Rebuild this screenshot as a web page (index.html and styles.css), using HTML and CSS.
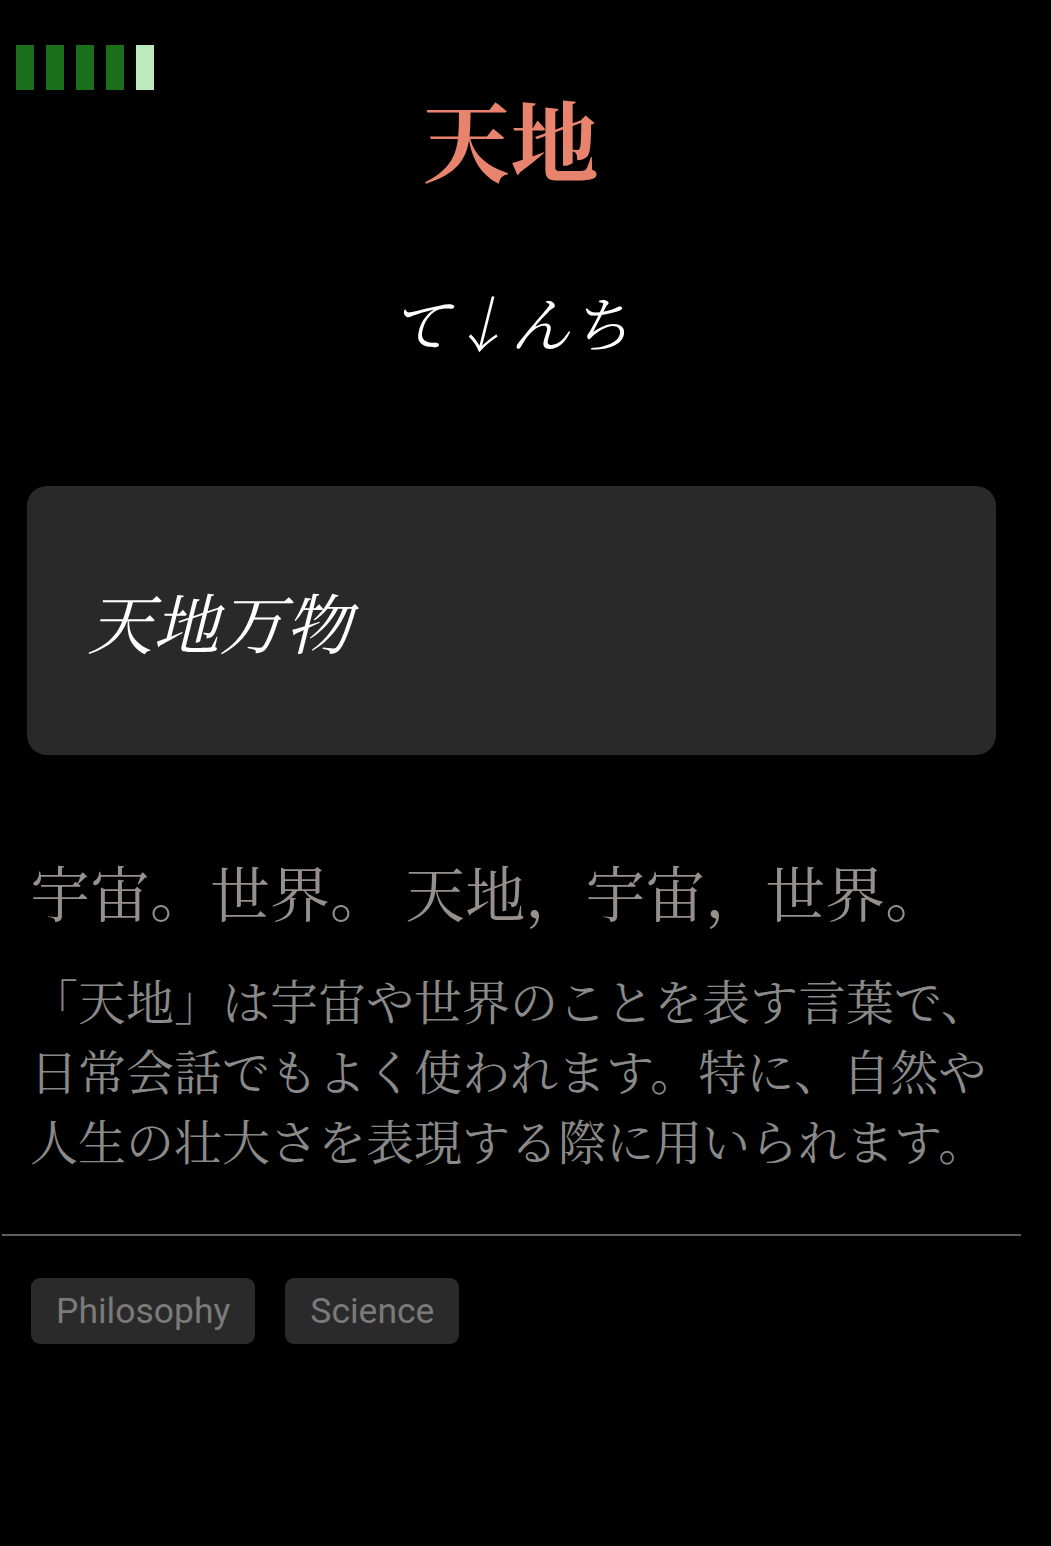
FILE: index.html
```html
<!DOCTYPE html>
<html lang="ja">
<head>
<meta charset="utf-8">
<title>天地</title>
<link rel="stylesheet" href="styles.css">
</head>
<body>
<main class="page">
  <div class="strength">
    <span class="bar on"></span>
    <span class="bar on"></span>
    <span class="bar on"></span>
    <span class="bar on"></span>
    <span class="bar off"></span>
  </div>
  <h1 class="word">天地</h1>
  <div class="reading">て↓んち</div>
  <section class="card">
    <p class="example">天地万物</p>
  </section>
  <p class="meaning">宇宙。世界。 天地，宇宙，世界。</p>
  <p class="desc">「天地」は宇宙や世界のことを表す言葉で、日常会話でもよく使われます。特に、自然や人生の壮大さを表現する際に用いられます。</p>
  <hr class="rule">
  <div class="tags">
    <span class="tag">Philosophy</span>
    <span class="tag">Science</span>
  </div>
</main>
</body>
</html>
```
FILE: styles.css
```css
html, body {
  margin: 0;
  padding: 0;
  background: #000;
}
body {
  font-family: "Noto Serif CJK JP", "Noto Serif CJK SC", serif;
}
.page {
  width: 1021px;
  padding-top: 45px;
}
.strength {
  display: flex;
  gap: 12px;
  margin-left: 16px;
  height: 45px;
}
.bar {
  width: 18px;
  height: 45px;
}
.bar.on { background: #1b6f1b; }
.bar.off { background: #bdeabd; }
.word {
  margin: 0;
  text-align: center;
  font-size: 88px;
  line-height: 94px;
  font-weight: 700;
  color: #e8846e;
}
.reading {
  margin-top: 97px;
  text-align: center;
  font-size: 60px;
  line-height: 80px;
  font-style: italic;
  color: #fff;
}
.card {
  margin: 125px 0 0 27px;
  width: 969px;
  height: 269px;
  box-sizing: border-box;
  background: #292929;
  border-radius: 20px;
  display: flex;
  align-items: center;
  padding-left: 60px;
}
.example {
  margin: 0;
  font-size: 66px;
  font-style: italic;
  color: #fff;
  line-height: 1.2;
}
.meaning {
  margin: 96px 0 0 30px;
  font-size: 60px;
  line-height: 80px;
  color: #968f8c;
}
.desc {
  margin: 34px 0 0 30px;
  width: 980px;
  font-size: 48px;
  line-height: 70px;
  color: #8a8a8a;
}
.rule {
  margin: 59px 0 0 2px;
  width: 1019px;
  border: 0;
  height: 2px;
  background: #5e5e5e;
}
.tags {
  display: flex;
  gap: 30px;
  margin: 42px 0 0 31px;
}
.tag {
  font-family: Roboto, "Noto Sans", sans-serif;
  font-size: 35.5px;
  line-height: 38px;
  padding: 14px 25px;
  background: #2a2a2a;
  color: #7a7a7a;
  border-radius: 9px;
}
```
